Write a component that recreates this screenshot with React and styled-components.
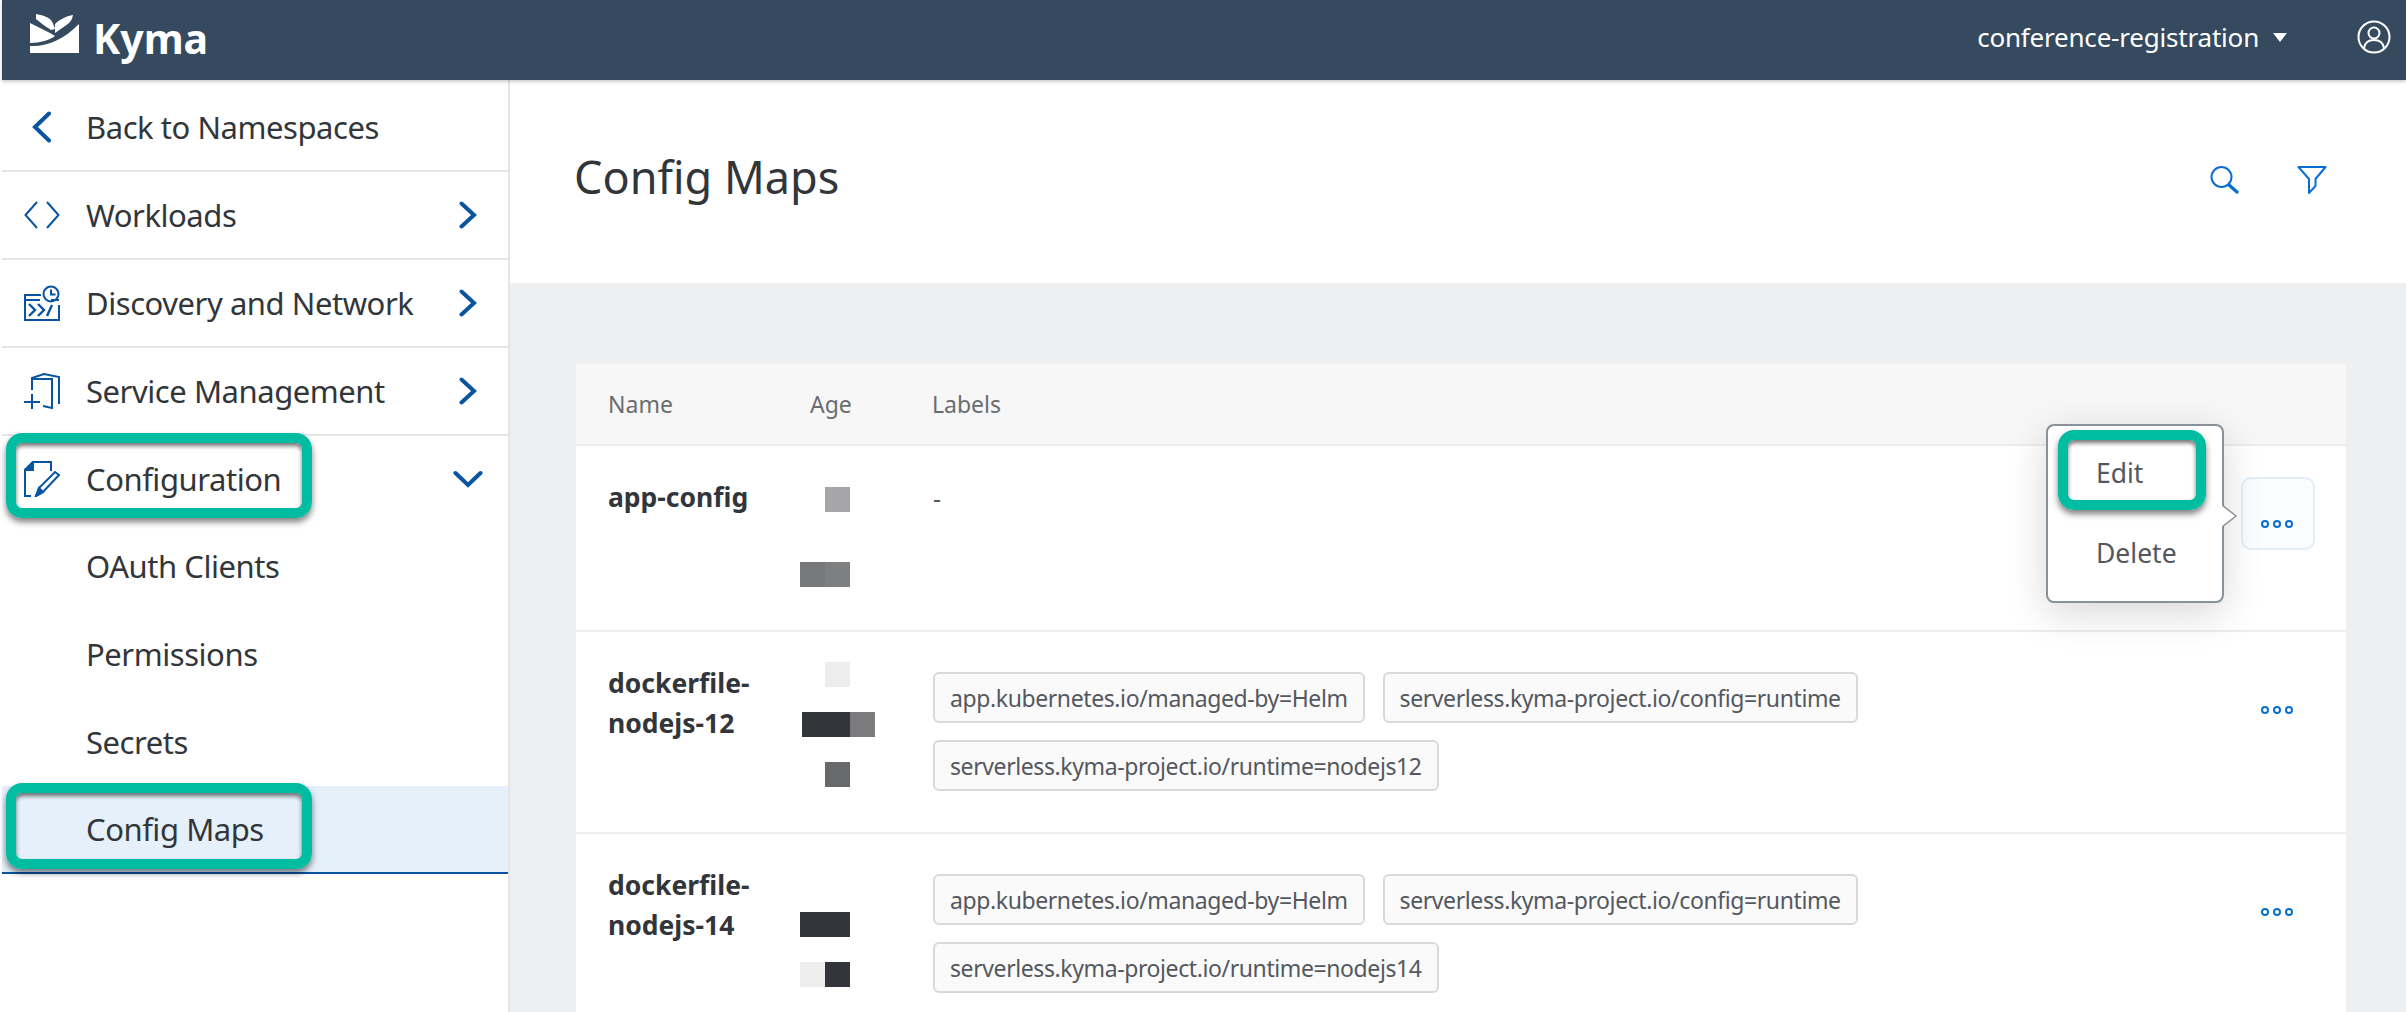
import styled, { createGlobalStyle } from "styled-components";

const GlobalStyle = createGlobalStyle`
  html, body {
    margin: 0;
    padding: 0;
    height: 1012px;
    overflow: hidden;
    background: #fff;
    font-family: "Noto Sans", "Open Sans", Arial, sans-serif;
    color: #32363a;
  }
  * { box-sizing: border-box; }
`;

const blue = "#0854a0";
const linkBlue = "#0a6ed1";
const teal = "#00bca1";

const Logo = () => (
  <LogoMark width="50" height="40" viewBox="0 0 50 40" fill="#fff">
    <path d="M0 9 L20 19 L25 22 C20 26 10 29 0 29 Z" />
    <path d="M49 10 V39 H0 V32 C18 33 34 25 49 10 Z" />
    <path d="M6 0 C12 1 18 3 21 6 C23 9 24 12 25 15 L21 16 C16 13 11 9 6 5 Z" />
    <path d="M25 10 C29 6 36 2 43 1 C42 6 40 9 35 12 L25 19 Z" />
  </LogoMark>
);

const ProfileIcon = () => (
  <svg width="34" height="34" viewBox="0 0 34 34" fill="none" stroke="#fff" strokeWidth="2">
    <circle cx="17" cy="17" r="15.5" />
    <circle cx="17" cy="13" r="5.5" />
    <path d="M7 28 C8 22 12 20 17 20 C22 20 26 22 27 28" />
  </svg>
);

const SearchIcon = () => (
  <svg width="30" height="30" viewBox="0 0 30 30" fill="none" stroke={linkBlue} strokeWidth="2">
    <circle cx="12.5" cy="12" r="10" />
    <path d="M20 20 L28 27" strokeWidth="3.4" strokeLinecap="round" />
  </svg>
);

const FilterIcon = () => (
  <svg width="30" height="30" viewBox="0 0 30 30" fill="none" stroke={linkBlue} strokeWidth="2" strokeLinejoin="round">
    <path d="M1.5 2 H28.5 L18.5 14 V21 L12 28 V14 Z" />
  </svg>
);

const WorkloadsIcon = () => (
  <svg width="36" height="36" viewBox="0 0 36 36" fill="none" stroke={blue} strokeWidth="2">
    <path d="M13 5 L1.5 18 L13 31" />
    <path d="M23 5 L34.5 18 L23 31" />
  </svg>
);

const DiscoveryIcon = () => (
  <svg width="36" height="36" viewBox="0 0 36 36" fill="none" stroke={blue} strokeWidth="2">
    <path d="M17 10 H1 V35 H35 V20" />
    <path d="M1 15 H16" />
    <path d="M27 15 H35" />
    <circle cx="27" cy="9" r="7.5" />
    <path d="M27 4.5 V9.5 H31.5" />
    <path d="M5 19 L11 25 L5 31" strokeWidth="2.4" />
    <path d="M14 19 L20 25 L14 31" strokeWidth="2.4" />
    <path d="M28 20 L23 31" strokeWidth="2.4" />
  </svg>
);

const ServiceIcon = () => (
  <svg width="36" height="36" viewBox="0 0 36 36" fill="none" stroke={blue} strokeWidth="2">
    <path d="M8 17 V5 L20 1 L35 4 V31" />
    <path d="M8 6 H28 V35 L19 33" />
    <path d="M0 29 H16 M8 21 V36" />
  </svg>
);

const ConfigIcon = () => (
  <svg width="36" height="36" viewBox="0 0 36 36" fill="none" stroke={blue} strokeWidth="2">
    <path d="M27 10 V1 H9 L1 9 V35 H7" />
    <path d="M9 1 V9 H1 Z" fill={blue} />
    <path d="M12 35 L15 27 L31 11 L35 14 L19 31 Z" />
    <path d="M12 35 L15 27 L19 31 Z" fill={blue} />
  </svg>
);

const Chevron = ({ dir }) => {
  if (dir === "left") {
    return (
      <svg width="20" height="32" viewBox="0 0 20 32" fill="none" stroke={blue} strokeWidth="4" strokeLinecap="round">
        <path d="M17 2.5 L3 16 L17 29.5" />
      </svg>
    );
  }
  if (dir === "down") {
    return (
      <svg width="30" height="18" viewBox="0 0 30 18" fill="none" stroke={blue} strokeWidth="4" strokeLinecap="round">
        <path d="M2.5 3 L15 15 L27.5 3" />
      </svg>
    );
  }
  return (
    <svg width="18" height="28" viewBox="0 0 18 28" fill="none" stroke={blue} strokeWidth="4" strokeLinecap="round">
      <path d="M2.5 2.5 L15 14 L2.5 25.5" />
    </svg>
  );
};

const navItems = [
  { label: "Workloads", icon: <WorkloadsIcon /> },
  { label: "Discovery and Network", icon: <DiscoveryIcon /> },
  { label: "Service Management", icon: <ServiceIcon /> },
];

const rows = [
  {
    name: "app-config",
    top: 41,
    gap: 50,
    age: [
      [{ w: 25, c: "transparent" }, { w: 25, c: "#a6a6a8" }],
      [{ w: 25, c: "#77787c" }, { w: 25, c: "#7e7f81" }],
    ],
    labels: null,
    open: true,
  },
  {
    name: "dockerfile-nodejs-12",
    top: 30,
    gap: 25,
    age: [
      [{ w: 25, c: "transparent" }, { w: 25, c: "#ededed" }],
      [{ w: 2, c: "transparent" }, { w: 48, c: "#32363a" }, { w: 25, c: "#7b7b7d" }],
      [{ w: 25, c: "transparent" }, { w: 25, c: "#68696d" }],
    ],
    labels: [
      "app.kubernetes.io/managed-by=Helm",
      "serverless.kyma-project.io/config=runtime",
      "serverless.kyma-project.io/runtime=nodejs12",
    ],
  },
  {
    name: "dockerfile-nodejs-14",
    top: 78,
    gap: 25,
    age: [
      [{ w: 50, c: "#32363a" }],
      [{ w: 25, c: "#ededed" }, { w: 25, c: "#32363a" }],
    ],
    labels: [
      "app.kubernetes.io/managed-by=Helm",
      "serverless.kyma-project.io/config=runtime",
      "serverless.kyma-project.io/runtime=nodejs14",
    ],
  },
];

const App = () => {
  return (
    <Page>
      <GlobalStyle />
      <Shell>
        <Brand>
          <Logo />
          <BrandName>Kyma</BrandName>
        </Brand>
        <ShellRight>
          <Namespace>conference-registration</Namespace>
          <Caret />
          <ProfileIcon />
        </ShellRight>
      </Shell>
      <Body>
        <SideNav>
          <NavRow>
            <NavIcon>
              <Chevron dir="left" />
            </NavIcon>
            <span>Back to Namespaces</span>
          </NavRow>
          {navItems.map((item) => (
            <NavRow key={item.label}>
              <NavIcon>{item.icon}</NavIcon>
              <span>{item.label}</span>
              <NavArrow>
                <Chevron />
              </NavArrow>
            </NavRow>
          ))}
          <NavRow $open>
            <NavIcon>
              <ConfigIcon />
            </NavIcon>
            <span>Configuration</span>
            <NavArrow>
              <Chevron dir="down" />
            </NavArrow>
            <Highlight $left={4} $top={-3} $width={306} $height={85} />
          </NavRow>
          <SubRow>OAuth Clients</SubRow>
          <SubRow>Permissions</SubRow>
          <SubRow>Secrets</SubRow>
          <SubRow $selected>
            Config Maps
            <Highlight $left={4} $top={-3} $width={306} $height={86} />
          </SubRow>
        </SideNav>
        <Main>
          <TitleBar>
            <Title>Config Maps</Title>
            <TitleActions>
              <SearchIcon />
              <FilterIcon />
            </TitleActions>
          </TitleBar>
          <Content>
            <Card>
              <HeadRow>
                <span>Name</span>
                <AgeHead>Age</AgeHead>
                <span>Labels</span>
              </HeadRow>
              {rows.map((row) => (
                <TableRow key={row.name}>
                  <NameCell>{row.name}</NameCell>
                  <AgeCell $top={row.top} $gap={row.gap}>
                    {row.age.map((blocks, i) => (
                      <PixelRow key={i}>
                        {blocks.map((b, j) => (
                          <Pixel key={j} $w={b.w} $c={b.c} />
                        ))}
                      </PixelRow>
                    ))}
                  </AgeCell>
                  {row.labels ? (
                    <LabelsCell>
                      {row.labels.map((label) => (
                        <Tag key={label}>{label}</Tag>
                      ))}
                    </LabelsCell>
                  ) : (
                    <NoLabels>-</NoLabels>
                  )}
                  <ActionCell>
                    <MoreButton $active={row.open}>
                      <Dot />
                      <Dot />
                      <Dot />
                    </MoreButton>
                    {row.open && (
                      <Popover>
                        <PopArrow width="16" height="24" viewBox="0 0 16 24">
                          <path d="M0 1 L14 12 L0 23" fill="#fff" stroke="#89919a" strokeWidth="1.5" />
                        </PopArrow>
                        <MenuItem>Edit</MenuItem>
                        <MenuItem>Delete</MenuItem>
                        <Highlight $left={10} $top={4} $width={148} $height={80} />
                      </Popover>
                    )}
                  </ActionCell>
                </TableRow>
              ))}
            </Card>
          </Content>
        </Main>
      </Body>
    </Page>
  );
};

export default App;

const Page = styled.div`
  height: 1012px;
  padding-left: 2px;
  display: flex;
  flex-direction: column;
  overflow: hidden;
`;
const Shell = styled.header`
  height: 80px;
  flex: none;
  background: #354a5f;
  display: flex;
  align-items: center;
  justify-content: space-between;
  padding: 0 15px 6px 28px;
  box-shadow: 0 2px 3px rgba(0, 0, 0, 0.2);
  position: relative;
  z-index: 2;
`;
const Brand = styled.div`
  display: flex;
  align-items: center;
  gap: 13px;
`;
const LogoMark = styled.svg`
  margin-top: -7px;
`;
const BrandName = styled.span`
  font-size: 41px;
  font-weight: 700;
  color: #fff;
  line-height: 1;
  margin-top: 3px;
`;
const ShellRight = styled.div`
  display: flex;
  align-items: center;
  color: #fff;
`;
const Namespace = styled.span`
  font-size: 26px;
  letter-spacing: -0.2px;
`;
const Caret = styled.span`
  width: 0;
  height: 0;
  border-left: 7px solid transparent;
  border-right: 7px solid transparent;
  border-top: 9px solid #fff;
  margin: 0 70px 0 14px;
`;
const Body = styled.div`
  flex: 1;
  display: flex;
  min-height: 0;
`;
const SideNav = styled.nav`
  width: 508px;
  flex: none;
  padding-top: 4px;
  border-right: 2px solid #e5e5e5;
  background: #fff;
`;
const NavRow = styled.div`
  position: relative;
  height: ${(p) => (p.$open ? "86px" : "88px")};
  display: flex;
  align-items: center;
  padding: 0 25px 0 22px;
  gap: 26px;
  font-size: 31px;
  letter-spacing: -0.45px;
  border-bottom: ${(p) => (p.$open ? "none" : "2px solid #e5e5e5")};
`;
const NavIcon = styled.span`
  width: 36px;
  height: 36px;
  flex: none;
  display: flex;
  align-items: center;
  justify-content: center;
`;
const NavArrow = styled.span`
  margin-left: auto;
  width: 30px;
  display: flex;
  justify-content: center;
`;
const SubRow = styled.div`
  position: relative;
  height: 88px;
  display: flex;
  align-items: center;
  padding-left: 84px;
  font-size: 31px;
  letter-spacing: -0.45px;
  background: ${(p) => (p.$selected ? "#e5f0fa" : "transparent")};
  border-bottom: ${(p) => (p.$selected ? `2px solid ${blue}` : "none")};
`;
const Highlight = styled.div`
  position: absolute;
  left: ${(p) => p.$left}px;
  top: ${(p) => p.$top}px;
  width: ${(p) => p.$width}px;
  height: ${(p) => p.$height}px;
  border: 10px solid ${teal};
  border-radius: 16px;
  box-shadow: 0 4px 6px rgba(0, 0, 0, 0.5), inset 0 3px 4px rgba(0, 0, 0, 0.55);
  pointer-events: none;
`;
const Main = styled.main`
  flex: 1;
  min-width: 0;
  display: flex;
  flex-direction: column;
  background: #edeff0;
`;
const TitleBar = styled.div`
  height: 203px;
  flex: none;
  background: #fff;
  display: flex;
  align-items: center;
  justify-content: space-between;
  padding: 0 79px 10px 64px;
`;
const Title = styled.h1`
  margin: 0;
  font-size: 45px;
  font-weight: 400;
`;
const TitleActions = styled.div`
  display: flex;
  align-items: center;
  gap: 58px;
  margin-top: 7px;
`;
const Content = styled.div`
  padding: 81px 60px 0 66px;
`;
const Card = styled.div`
  background: #fff;
  border-radius: 4px 4px 0 0;
`;
const HeadRow = styled.div`
  height: 82px;
  display: grid;
  grid-template-columns: 182px 142px 1fr;
  align-items: center;
  padding-left: 32px;
  background: #f7f7f7;
  border-bottom: 2px solid #ededed;
  font-size: 23px;
  color: #6a6d70;
`;
const AgeHead = styled.span`
  padding-left: 20px;
`;
const TableRow = styled.div`
  display: grid;
  grid-template-columns: 182px 143px 1fr auto;
  padding-left: 32px;
  border-bottom: 2px solid #ededed;
`;
const NameCell = styled.div`
  padding-top: 31px;
  font-size: 26.5px;
  font-weight: 700;
  line-height: 40px;
  width: 170px;
`;
const AgeCell = styled.div`
  padding: ${(p) => p.$top}px 0 43px 10px;
  display: flex;
  flex-direction: column;
  gap: ${(p) => p.$gap}px;
`;
const PixelRow = styled.div`
  display: flex;
  height: 25px;
`;
const Pixel = styled.span`
  width: ${(p) => p.$w}px;
  background: ${(p) => p.$c};
`;
const LabelsCell = styled.div`
  padding: 40px 0 41px;
  display: flex;
  flex-wrap: wrap;
  align-content: flex-start;
  gap: 17px 18px;
  max-width: 960px;
`;
const NoLabels = styled.div`
  padding-top: 32px;
  font-size: 25px;
  line-height: 40px;
  color: #54585e;
`;
const Tag = styled.span`
  height: 51px;
  display: inline-flex;
  align-items: center;
  padding: 0 15px;
  background: #fafafa;
  border: 2px solid #d9d9d9;
  border-radius: 6px;
  font-size: 23px;
  letter-spacing: -0.4px;
  color: #54585e;
  white-space: nowrap;
`;
const ActionCell = styled.div`
  position: relative;
  padding: 31px 31px 0 0;
`;
const MoreButton = styled.div`
  width: 74px;
  height: 73px;
  display: flex;
  align-items: center;
  justify-content: center;
  gap: 4px;
  padding: 20px 2px 0 0;
  border-radius: 10px;
  border: 2px solid ${(p) => (p.$active ? "#e2eefa" : "transparent")};
  background: ${(p) => (p.$active ? "#fbfcfd" : "transparent")};
`;
const Dot = styled.span`
  width: 8px;
  height: 8px;
  border: 2.4px solid ${linkBlue};
  border-radius: 50%;
`;
const Popover = styled.div`
  position: absolute;
  right: 122px;
  top: -22px;
  width: 178px;
  height: 179px;
  padding-top: 7px;
  background: #fff;
  border: 2px solid #89919a;
  border-radius: 8px;
  box-shadow: 0 10px 40px rgba(0, 0, 0, 0.16);
`;
const PopArrow = styled.svg`
  position: absolute;
  right: -16px;
  top: 78px;
`;
const MenuItem = styled.div`
  height: 80px;
  display: flex;
  align-items: center;
  padding-left: 48px;
  font-size: 26.5px;
  color: #54585e;
`;
